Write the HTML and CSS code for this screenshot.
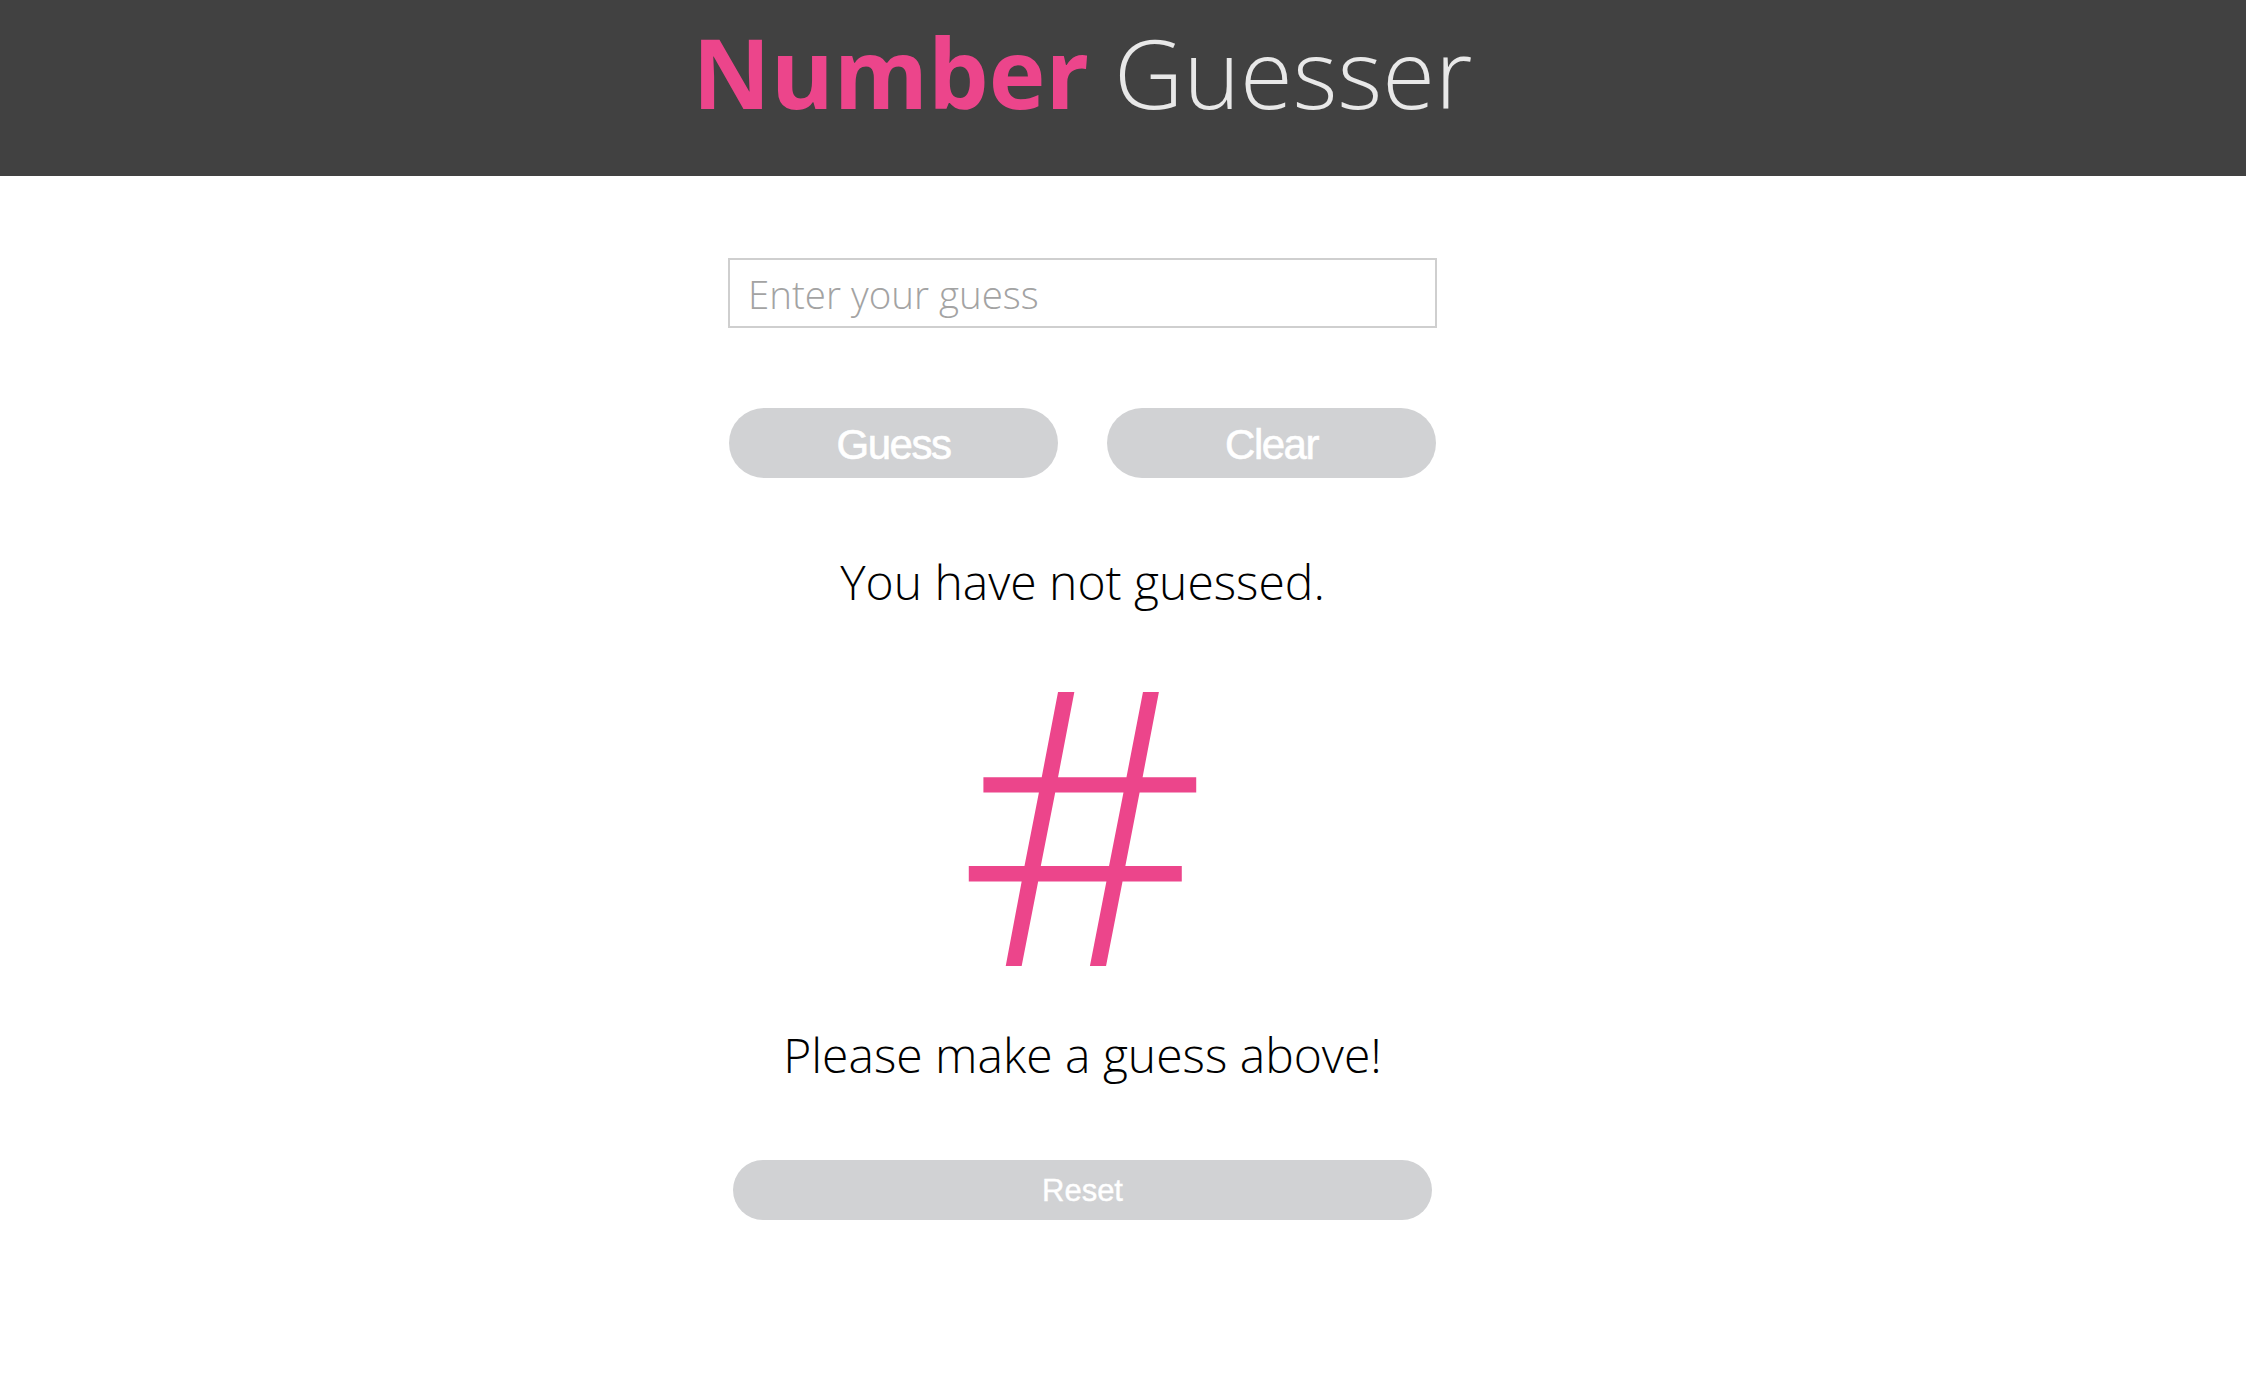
FILE: index.html
```html
<!DOCTYPE html>
<html lang="en">
<head>
<meta charset="utf-8">
<title>Number Guesser</title>
<link rel="stylesheet" href="styles.css">
</head>
<body>
<header class="site-header">
  <h1 class="title"><span class="title-bold">Number</span> <span class="title-light">Guesser</span></h1>
</header>
<main class="game">
  <input class="guess-input" type="text" placeholder="Enter your guess">
  <div class="button-row">
    <button class="pill-btn">Guess</button>
    <button class="pill-btn">Clear</button>
  </div>
  <p class="status">You have not guessed.</p>
  <p class="last-guess">#</p>
  <p class="hint">Please make a guess above!</p>
  <button class="pill-btn reset-btn">Reset</button>
</main>
</body>
</html>
```
FILE: styles.css
```css
html, body {
  margin: 0;
  padding: 0;
  background: #ffffff;
}

body {
  font-family: "Open Sans", "DejaVu Sans", sans-serif;
}

.site-header {
  height: 176px;
  background: #414141;
  padding-right: 81px;
  display: flex;
  justify-content: center;
  align-items: flex-start;
}

.title {
  margin: 0;
  margin-top: 6px;
  font-size: 96px;
  line-height: 131px;
  white-space: nowrap;
  letter-spacing: 0;
}

.title-bold {
  font-weight: 700;
  color: #ec458b;
}

.title-light {
  font-weight: 300;
  color: #e8e8e8;
}

.game {
  padding-right: 81px;
  display: flex;
  flex-direction: column;
  align-items: center;
}

.guess-input {
  box-sizing: border-box;
  width: 709px;
  height: 70px;
  margin-top: 82px;
  border: 2px solid #cfcfcf;
  padding: 2px 0 0 18px;
  font-family: "Open Sans", sans-serif;
  font-weight: 300;
  font-size: 38.5px;
  color: #333;
  outline: none;
  background: #fff;
}

.guess-input::placeholder {
  color: #a3a3a3;
}

.button-row {
  display: flex;
  gap: 49px;
  margin-top: 80px;
  width: 707px;
}

.pill-btn {
  box-sizing: border-box;
  width: 329px;
  height: 70px;
  border: none;
  border-radius: 35px;
  background: #d1d2d4;
  color: #ffffff;
  font-family: "Liberation Sans", Arial, sans-serif;
  font-size: 42px;
  letter-spacing: -1.5px;
  padding: 4px 0 0;
  -webkit-text-stroke: 0.6px #ffffff;
  cursor: pointer;
}

.status,
.hint {
  margin: 0;
  font-size: 48px;
  font-weight: 300;
  line-height: 68px;
  color: #000;
  text-align: center;
}

.status {
  margin-top: 70px;
}

.last-guess {
  margin: 10px 0 0;
  font-size: 384px;
  line-height: 384px;
  font-weight: 300;
  color: #ec458b;
  text-align: center;
}

.hint {
  margin-top: 11px;
}

.reset-btn {
  width: 699px;
  height: 60px;
  border-radius: 30px;
  margin-top: 71px;
  font-size: 31px;
  letter-spacing: 0;
  padding-top: 2px;
  -webkit-text-stroke: 0.4px #ffffff;
}
```
